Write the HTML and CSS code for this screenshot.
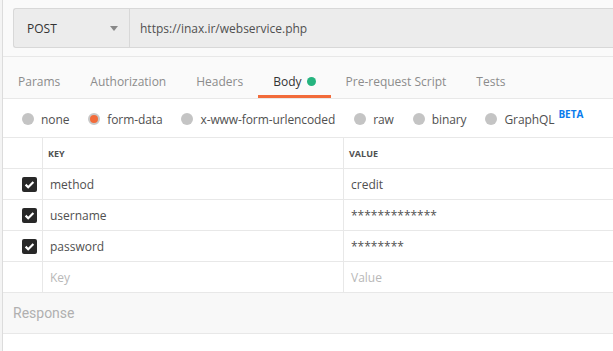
FILE: index.html
```html
<!DOCTYPE html>
<html lang="en">
<head>
<meta charset="UTF-8" /><meta name="viewport" content="width=device-width, initial-scale=1.0" />
<title>Request</title>
<link rel="stylesheet" href="styles.css">
</head>
<body>
<div class="app">
  <div class="urlbar">
    <div class="url">
      <div class="method">POST <span class="caret"></span></div>
      <div class="addr">https://inax.ir/webservice.php</div>
    </div>
  </div>
  <div class="tabs">
    <div class="tab">Params</div>
    <div class="tab">Authorization</div>
    <div class="tab">Headers</div>
    <div class="tab active">Body <span class="dot"></span></div>
    <div class="tab">Pre-request Script</div>
    <div class="tab">Tests</div>
  </div>
  <div class="modes">
    <label class="mode"><span class="radio"></span>none</label>
    <label class="mode"><span class="radio on"></span>form-data</label>
    <label class="mode"><span class="radio"></span>x-www-form-urlencoded</label>
    <label class="mode"><span class="radio"></span>raw</label>
    <label class="mode"><span class="radio"></span>binary</label>
    <label class="mode"><span class="radio"></span>GraphQL <sup class="beta">BETA</sup></label>
  </div>
  <div class="grid">
    <div class="row head">
      <div class="chk"></div><div class="cell">KEY</div><div class="cell">VALUE</div>
    </div>
    <div class="row">
      <div class="chk"><span class="box"><svg viewBox="0 0 15 15" width="15" height="15"><path d="M3.6 7.6l2.6 2.6L11.4 4.9" fill="none" stroke="#fff" stroke-width="2.2"/></svg></span></div>
      <div class="cell">method</div><div class="cell">credit</div>
    </div>
    <div class="row">
      <div class="chk"><span class="box"><svg viewBox="0 0 15 15" width="15" height="15"><path d="M3.6 7.6l2.6 2.6L11.4 4.9" fill="none" stroke="#fff" stroke-width="2.2"/></svg></span></div>
      <div class="cell">username</div><div class="cell">*************</div>
    </div>
    <div class="row">
      <div class="chk"><span class="box"><svg viewBox="0 0 15 15" width="15" height="15"><path d="M3.6 7.6l2.6 2.6L11.4 4.9" fill="none" stroke="#fff" stroke-width="2.2"/></svg></span></div>
      <div class="cell">password</div><div class="cell">********</div>
    </div>
    <div class="row">
      <div class="chk"></div><div class="cell ph">Key</div><div class="cell ph">Value</div>
    </div>
  </div>
  <div class="response">Response</div>
</div>
</body>
</html>
```
FILE: styles.css
```css
body { margin: 0; background: #f4f4f4; font-family: "Open Sans", sans-serif; color: #505050; overflow: hidden; }
.app { margin-left: 2px; border-left: 1px solid #dcdcdc; background: #fff; height: 351px; }
.urlbar { background: #fafafa; height: 57px; border-bottom: 1px solid #e8e8e8; padding: 8px 0 0 10px; box-sizing: border-box; }
.url { display: flex; height: 40px; box-sizing: border-box; background: #ececec; border: 1px solid #d8d8d8; border-right: none; border-radius: 3px 0 0 3px; font-size: 12px; }
.method { width: 116px; border-right: 1px solid #d8d8d8; display: flex; align-items: center; padding-left: 13px; box-sizing: border-box; color: #333; position: relative; }
.caret { position: absolute; left: 96px; top: 17px; border: 4px solid transparent; border-top: 5px solid #888; border-bottom: none; }
.addr { display: flex; align-items: center; padding-left: 10px; color: #505050; }
.tabs { display: flex; background: #fafafa; height: 41px; border-bottom: 1px solid #e8e8e8; font-size: 12px; }
.tab { padding: 0 15px; display: flex; align-items: center; color: #8c8c8c; padding-top: 7px; box-sizing: border-box; white-space: nowrap; }
.tab.active { color: #333; border-bottom: 3px solid #f26b3a; padding-top: 10px; }
.dot { width: 9px; height: 9px; border-radius: 50%; background: #26b47f; margin-left: 5px; }
.modes { display: flex; height: 39px; align-items: center; padding-left: 19px; font-size: 12px; color: #505050; border-bottom: 1px solid #e8e8e8; white-space: nowrap; padding-top: 2px; box-sizing: border-box; letter-spacing: -0.1px; }
.mode { display: flex; align-items: center; margin-right: 19px; }
.radio { width: 12px; height: 12px; border-radius: 50%; background: #c4c4c4; margin-right: 7px; box-sizing: border-box; }
.radio.on { background: #f26b3a; border: 2px solid #c8c8c8; }
.beta { color: #097bed; font-size: 10px; font-weight: bold; margin-left: 4px; align-self: flex-start; margin-top: -4px; letter-spacing: 0; }
.row { display: flex; height: 31px; border-bottom: 1px solid #e8e8e8; font-size: 12px; box-sizing: border-box; }
.chk { width: 40px; border-right: 1px solid #e8e8e8; display: flex; align-items: center; justify-content: flex-end; padding-right: 5px; box-sizing: border-box; }
.cell { width: 301px; display: flex; align-items: center; padding-left: 7px; box-sizing: border-box; border-right: 1px solid #e8e8e8; }
.cell:last-child { flex: 1; border-right: none; }
.head .cell { font-size: 9px; font-weight: bold; color: #505050; padding-left: 5px; }
.box { width: 15px; height: 15px; background: #282828; border-radius: 2px; display: block; }
.box svg { display: block; }
.ph { color: #b8b8b8; }
.response { background: #f8f8f8; height: 41px; border-bottom: 1px solid #e8e8e8; display: flex; align-items: center; padding-left: 10px; font-size: 14px; color: #b0b0b0; font-family: Roboto, sans-serif; box-sizing: border-box; }
```
